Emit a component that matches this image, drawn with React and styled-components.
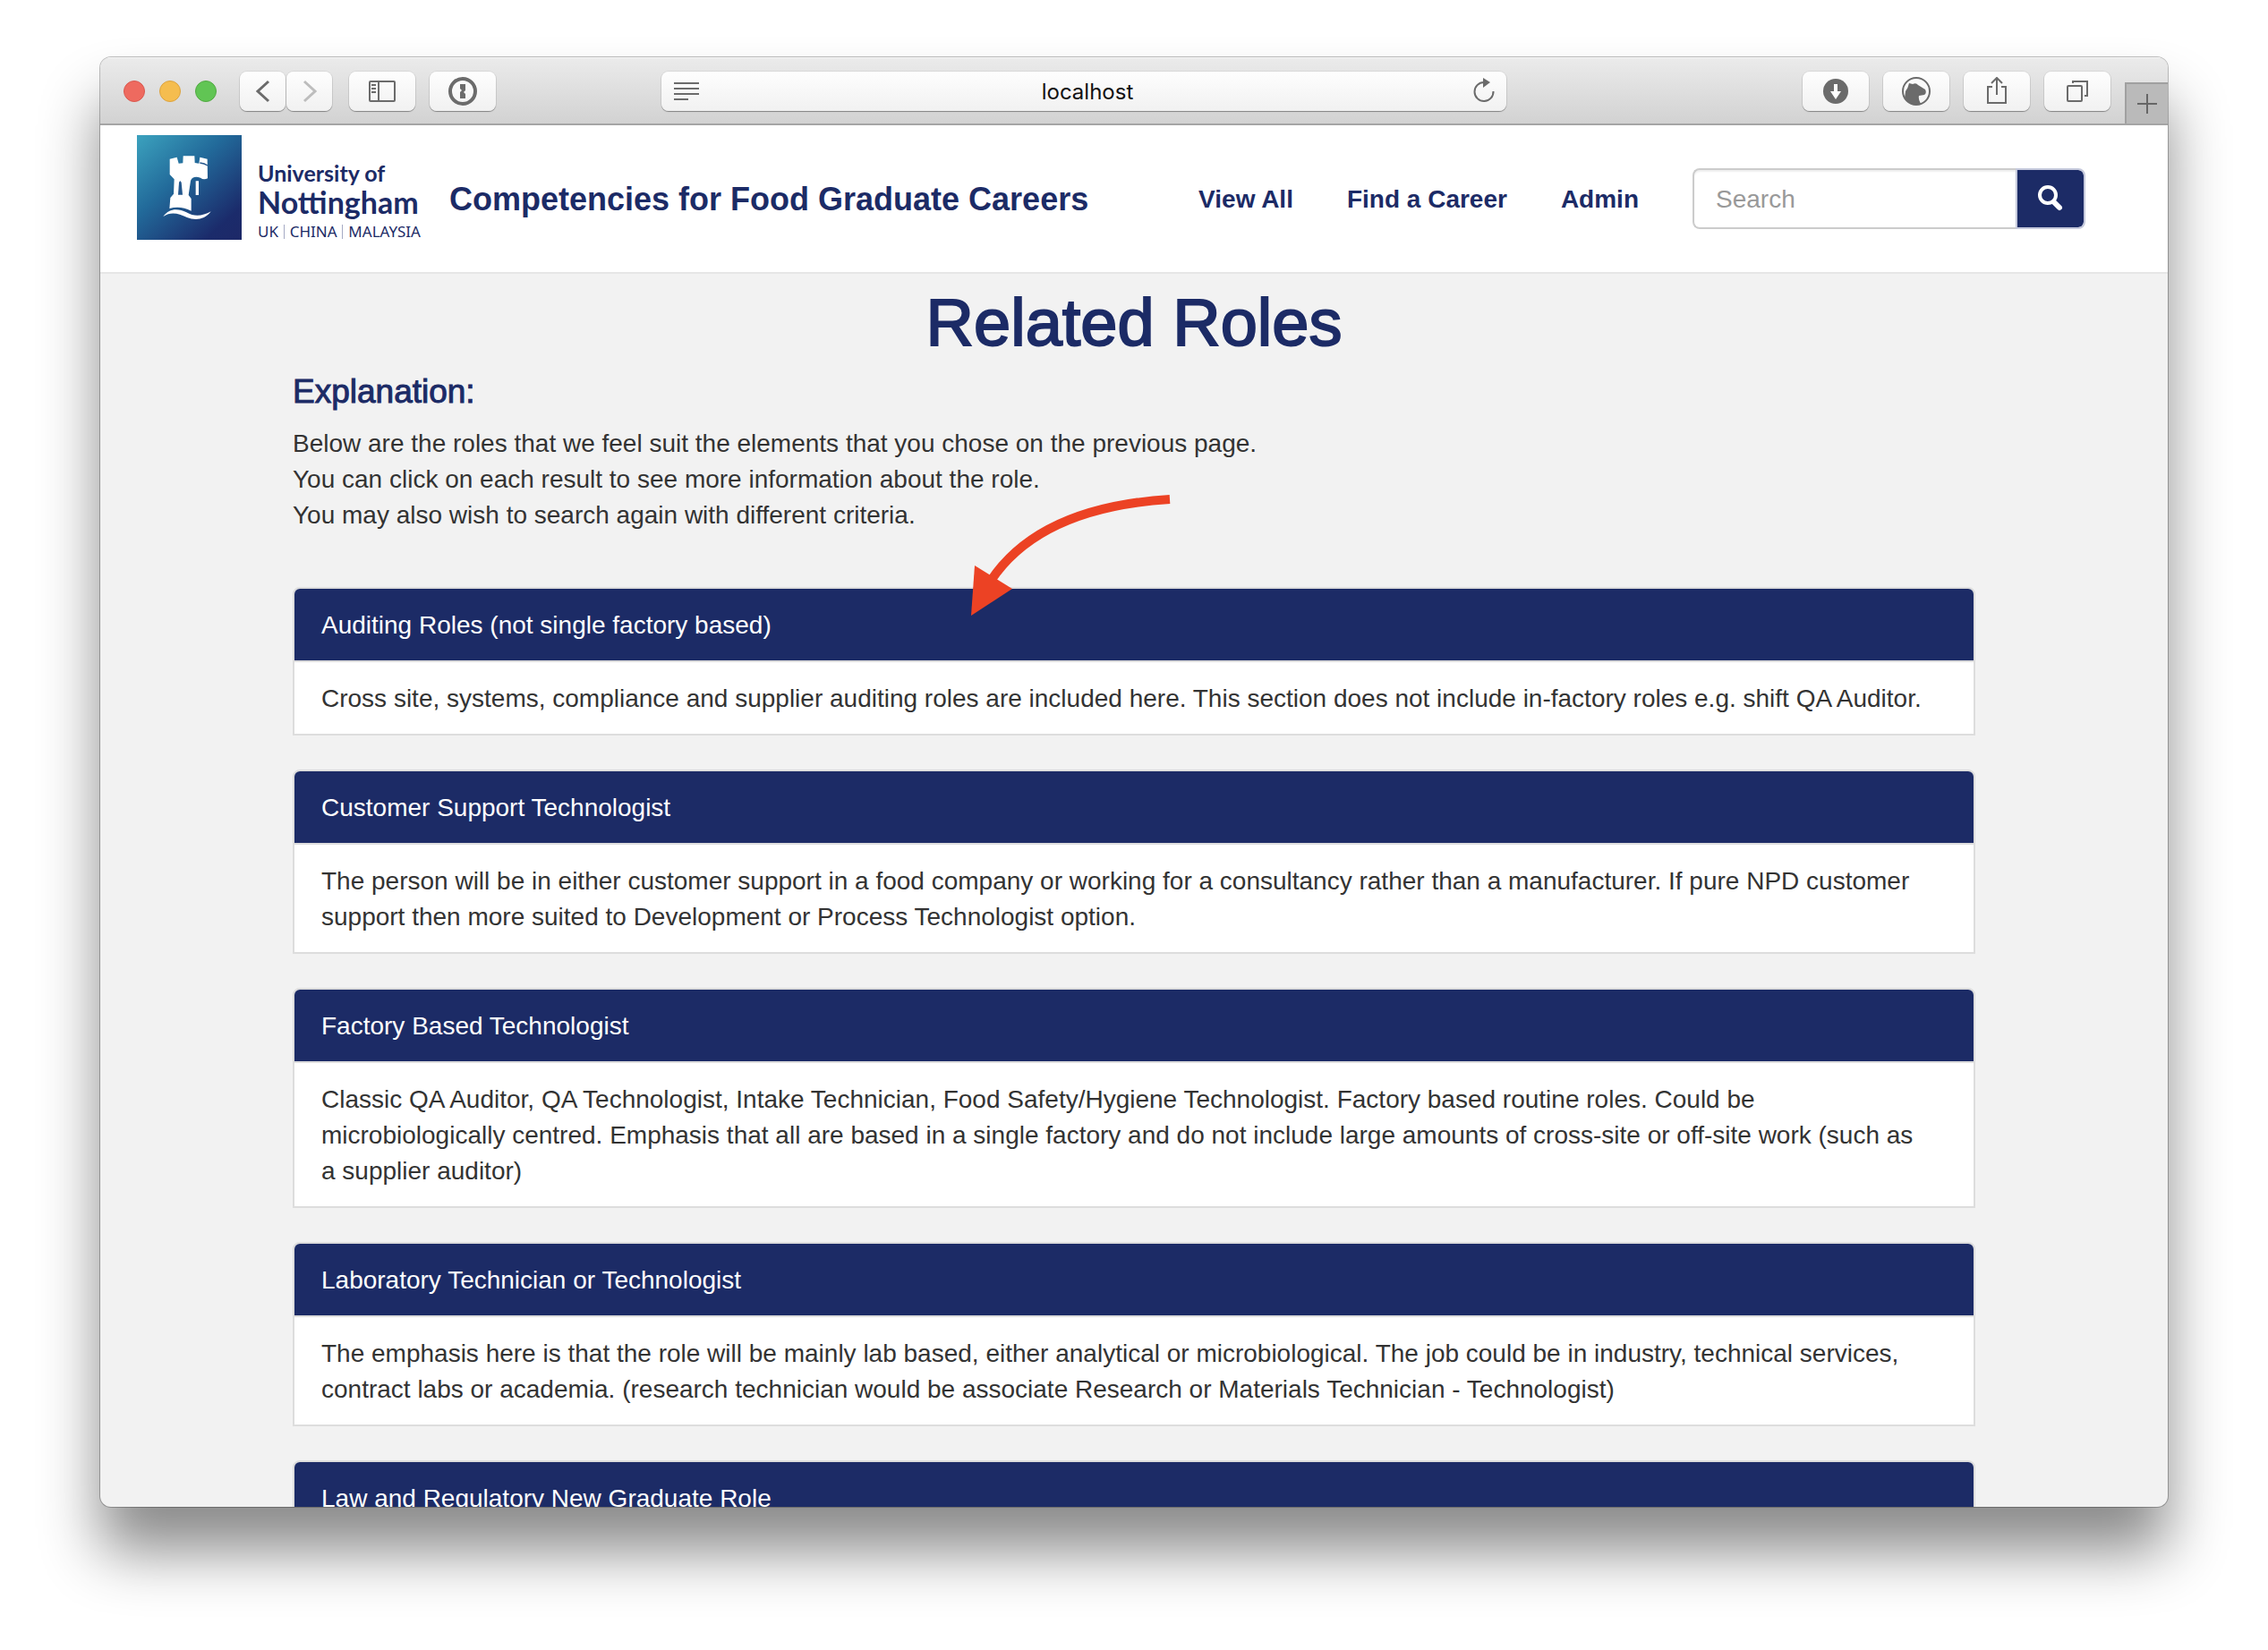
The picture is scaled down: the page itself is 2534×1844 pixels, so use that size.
import React from 'react';
import styled, { createGlobalStyle } from 'styled-components';

const navy = '#1c2b66';
const sans = '"Liberation Sans", Arial, sans-serif';

const GlobalStyle = createGlobalStyle`
  *, *::before, *::after { box-sizing: border-box; }
  body { margin: 0; background: #fff; font-family: ${sans}; font-size: 28px; line-height: 40px; color: #333; }
  button, input { font: inherit; }
  h1, h2, h3, p { margin: 0; }
`;

const Desktop = styled.div`
  height: 100vh;
  padding: 64px 112px 160px;
  overflow: hidden;
`;

const BrowserWindow = styled.div`
  display: flex;
  flex-direction: column;
  height: 100%;
  overflow: hidden;
  border-radius: 12px;
  background: #f2f2f2;
  box-shadow: 0 0 0 1px rgba(0, 0, 0, 0.25), 0 50px 66px rgba(0, 0, 0, 0.46);
`;

const Toolbar = styled.div`
  display: flex;
  flex: none;
  align-items: center;
  height: 76px;
  padding: 2px 0 0 26px;
  border-bottom: 2px solid #a5a5a5;
  background: linear-gradient(#ebebeb, #d2d2d2);
  box-shadow: inset 0 1px 0 #f6f6f6;
`;

const Group = styled.div`
  display: flex;
  flex: none;
  gap: ${({ $gap }) => $gap}px;
  margin-right: ${({ $after = 0 }) => $after}px;
`;

const Light = styled.button`
  width: 24px;
  height: 24px;
  padding: 0;
  border: 1px solid ${({ $edge }) => $edge};
  border-radius: 50%;
  background: ${({ $fill }) => $fill};
`;

const ToolButton = styled.button`
  display: flex;
  align-items: center;
  justify-content: center;
  width: ${({ $narrow }) => ($narrow ? 51 : 74)}px;
  height: 44px;
  padding: 0;
  border: 0;
  border-radius: 8px;
  color: #6b6b6b;
  background: linear-gradient(#fefefe, #f1f1f1);
  box-shadow: 0 1px 1px rgba(0, 0, 0, 0.35), 0 0 0 1px rgba(0, 0, 0, 0.06);
`;

const AddressArea = styled.div`
  display: flex;
  flex: 1;
  justify-content: center;
  padding-right: 146px;
`;

const AddressBar = styled.div`
  display: flex;
  align-items: center;
  width: 944px;
  height: 44px;
  padding: 0 13px;
  border-radius: 8px;
  color: #6b6b6b;
  background: linear-gradient(#fefefe, #f1f1f1);
  box-shadow: 0 1px 1px rgba(0, 0, 0, 0.35), 0 0 0 1px rgba(0, 0, 0, 0.06);
`;

const AddressInput = styled.input`
  flex: 1;
  min-width: 0;
  padding: 2px 0 0;
  border: 0;
  outline: 0;
  background: none;
  color: #111;
  font-family: Inter, sans-serif;
  font-size: 24px;
  text-align: center;
`;

const PlainButton = styled.button`
  display: flex;
  padding: 0;
  border: 0;
  background: none;
  color: inherit;
`;

const NewTab = styled.button`
  display: flex;
  align-items: center;
  justify-content: center;
  align-self: flex-end;
  width: 48px;
  height: 46px;
  padding: 0;
  border: 0;
  border-top: 2px solid #a0a0a0;
  border-left: 2px solid #a0a0a0;
  background: #bababa;
  color: #666;
`;

const SiteHeader = styled.header`
  display: flex;
  flex: none;
  align-items: center;
  height: 166px;
  padding: 0 92px 0 41px;
  border-bottom: 2px solid #e6e6e6;
  background: #fff;
`;

const Brand = styled.a`
  display: flex;
  gap: 18px;
  height: 142px;
  color: ${navy};
  text-decoration: none;
`;

const CastleBadge = styled.svg`
  flex: none;
`;

const Wordmark = styled.span`
  display: flex;
  flex-direction: column;
  width: 182px;
  padding-top: 26px;
  white-space: nowrap;
`;

const WordLine = styled.span`
  font-family: Lato, sans-serif;
  font-size: ${({ $size }) => $size}px;
  line-height: ${({ $line }) => $line}px;
  font-weight: 700;
`;

const Campuses = styled.span`
  display: flex;
  justify-content: space-between;
  font-family: "Noto Sans", sans-serif;
  font-size: 17px;
  line-height: 32px;
`;

const Divider = styled.i`
  width: 1px;
  height: 16px;
  margin-top: 8px;
  background: #a5aac4;
`;

const SiteTitle = styled.a`
  margin-left: 32px;
  padding-top: 2px;
  color: ${navy};
  font-size: 36px;
  font-weight: 700;
  text-decoration: none;
  white-space: nowrap;
`;

const Nav = styled.nav`
  display: flex;
  gap: 60px;
  margin-left: auto;
  padding-top: 2px;
  white-space: nowrap;
`;

const NavLink = styled.a`
  color: ${navy};
  font-weight: 700;
  text-decoration: none;
`;

const SearchForm = styled.form`
  display: flex;
  width: 439px;
  height: 68px;
  margin-left: 60px;
`;

const SearchInput = styled.input`
  flex: 1;
  min-width: 0;
  padding: 2px 24px 0;
  border: 2px solid #ccc;
  border-right: 0;
  border-radius: 8px 0 0 8px;
  outline: 0;
  box-shadow: inset 0 2px 2px rgba(0, 0, 0, 0.07);
  color: #333;
  &::placeholder { color: #999; opacity: 1; }
`;

const SearchButton = styled.button`
  display: flex;
  align-items: center;
  justify-content: center;
  width: 78px;
  padding: 0;
  border: 2px solid #c5c9dc;
  border-radius: 0 8px 8px 0;
  background: ${navy};
  background-clip: padding-box;
`;

const Content = styled.main`
  width: 100%;
  max-width: 1880px;
  margin: 0 auto;
  padding-top: 15px;
`;

const PageTitle = styled.h1`
  color: ${navy};
  font-size: 74px;
  line-height: 80px;
  font-weight: 400;
  text-align: center;
  -webkit-text-stroke: 2px ${navy};
`;

const Intro = styled.section`
  position: relative;
  padding: 17px 0 60px;
`;

const IntroTitle = styled.h2`
  margin-bottom: 18px;
  color: ${navy};
  font-size: 37px;
  line-height: 40px;
  font-weight: 400;
  -webkit-text-stroke: 1px ${navy};
`;

const Arrow = styled.svg`
  position: absolute;
  left: 756px;
  bottom: -34px;
`;

const RoleList = styled.div`
  display: grid;
  gap: 38px;
`;

const RoleCard = styled.article`
  border: 2px solid #ddd;
  border-radius: 8px 8px 0 0;
  background: #fff;
`;

const RoleTitle = styled.h3`
  padding: 21px 30px 19px;
  border-radius: 6px 6px 0 0;
  background: ${navy};
  font-size: 28px;
  font-weight: 400;
`;

const RoleLink = styled.a`
  color: #fff;
  text-decoration: none;
`;

const RoleText = styled.p`
  padding: 21px 30px 19px;
  border-top: 2px solid #ddd;
`;

const roles = [
  {
    title: 'Auditing Roles (not single factory based)',
    lines: ['Cross site, systems, compliance and supplier auditing roles are included here. This section does not include in-factory roles e.g. shift QA Auditor.'],
  },
  {
    title: 'Customer Support Technologist',
    lines: [
      'The person will be in either customer support in a food company or working for a consultancy rather than a manufacturer. If pure NPD customer',
      'support then more suited to Development or Process Technologist option.',
    ],
  },
  {
    title: 'Factory Based Technologist',
    lines: [
      'Classic QA Auditor, QA Technologist, Intake Technician, Food Safety/Hygiene Technologist. Factory based routine roles. Could be',
      'microbiologically centred. Emphasis that all are based in a single factory and do not include large amounts of cross-site or off-site work (such as',
      'a supplier auditor)',
    ],
  },
  {
    title: 'Laboratory Technician or Technologist',
    lines: [
      'The emphasis here is that the role will be mainly lab based, either analytical or microbiological. The job could be in industry, technical services,',
      'contract labs or academia. (research technician would be associate Research or Materials Technician - Technologist)',
    ],
  },
  { title: 'Law and Regulatory New Graduate Role', lines: [] },
];

const Icon = ({ w = 32, h = 32, children }) => (
  <svg width={w} height={h} viewBox={`0 0 ${w} ${h}`} fill="none" stroke="currentColor" strokeWidth="2" aria-hidden="true">
    {children}
  </svg>
);

const CastleMark = () => (
  <CastleBadge width="117" height="117" viewBox="39 33 351 351" aria-hidden="true">
    <defs>
      <linearGradient id="mark" x1="0.05" y1="0" x2="0.95" y2="1">
        <stop offset="0" stopColor="#3a9fbc" />
        <stop offset="0.4" stopColor="#226a9a" />
        <stop offset="0.85" stopColor="#1b2b6b" />
        <stop offset="1" stopColor="#1d2968" />
      </linearGradient>
    </defs>
    <rect x="39" y="33" width="351" height="351" fill="url(#mark)" />
    <g fill="#fff">
      <path d="M149 113 L173 107 L179 128 L193 127 L194 103 L232 103 L233 126 L247 128 L250 107 L275 113 L276 178 Q262 184 252 176 Q226 168 219 186 L212 234 L221 246 V287 Q184 268 148 279 L151 243 L162 230 L164 181 L149 165 Z" />
      <path d="M236 187h10v47h-10z" />
      <path d="M127 306 C149 276 178 279 205 292 C232 308 258 305 287 289 C265 319 232 319 207 309 C178 295 153 288 127 306 Z" />
    </g>
    <path d="M180 192 Q184 181 188 192 L192 233 H177 Z" fill="#24578c" />
    <path d="M250 126 Q265 127 276 135" stroke="#24578c" strokeWidth="4" fill="none" />
  </CastleBadge>
);

export default function App() {
  return (
    <Desktop>
      <GlobalStyle />
      <BrowserWindow>
        <Toolbar>
          <Group $gap={16} $after={26}>
            <Light $fill="#ee6a5f" $edge="#d9584f" aria-label="Close" />
            <Light $fill="#f5bd4f" $edge="#dca33f" aria-label="Minimise" />
            <Light $fill="#61c554" $edge="#52a943" aria-label="Zoom" />
          </Group>
          <Group $gap={1} $after={19}>
            <ToolButton $narrow aria-label="Back">
              <Icon><path d="M22 5 L10 16 L22 27" strokeWidth="3" /></Icon>
            </ToolButton>
            <ToolButton $narrow aria-label="Forward">
              <Icon><path d="M10 5 L22 16 L10 27" strokeWidth="3" stroke="#bdbdbd" /></Icon>
            </ToolButton>
          </Group>
          <Group $gap={16}>
            <ToolButton aria-label="Show sidebar">
              <Icon>
                <rect x="2" y="5" width="28" height="22" rx="1" />
                <path d="M12 5v22M4 9h5M4 13h5M4 17h5" />
              </Icon>
            </ToolButton>
            <ToolButton aria-label="Password manager">
              <Icon>
                <circle cx="16" cy="16" r="14" strokeWidth="4" />
                <path d="M13 8h6v7l-2 2 2 2v5h-6v-7l2-2-2-2z" fill="currentColor" stroke="none" />
              </Icon>
            </ToolButton>
          </Group>
          <AddressArea>
            <AddressBar>
              <PlainButton aria-label="Reader view">
                <Icon><path d="M1 7h28M1 13h28M1 19h28M1 25h16" /></Icon>
              </PlainButton>
              <AddressInput aria-label="Address" defaultValue="localhost" />
              <PlainButton aria-label="Reload">
                <Icon w={24}>
                  <path d="M12 6 A10.5 10.5 0 1 0 22.500 16" />
                  <path d="M11 1 L19 6 L11 12 Z" fill="currentColor" stroke="none" />
                </Icon>
              </PlainButton>
            </AddressBar>
          </AddressArea>
          <Group $gap={16} $after={16}>
            <ToolButton aria-label="Downloads">
              <Icon>
                <circle cx="16" cy="16" r="14" fill="currentColor" stroke="none" />
                <path d="M14 8h4v8h4l-6 9-6-9h4z" fill="#fff" stroke="none" />
              </Icon>
            </ToolButton>
            <ToolButton aria-label="Privacy extension">
              <Icon>
                <circle cx="16" cy="16" r="15" />
                <path d="M3 24 L4 16 Q7 12 8 7 L12 8 Q16 6 18 9 L26 14 Q28 18 25 20 L19 21 Q18 25 21 30 Q10 34 3 24Z" fill="currentColor" stroke="none" />
              </Icon>
            </ToolButton>
            <ToolButton aria-label="Share">
              <Icon>
                <path d="M11 11H6v18h20V11h-5M16 20V2M10 7l6-6 6 6" />
              </Icon>
            </ToolButton>
            <ToolButton aria-label="Show all tabs">
              <Icon>
                <rect x="5" y="10" width="16" height="17" rx="1" />
                <path d="M11 7V5h16v16h-3" />
              </Icon>
            </ToolButton>
          </Group>
          <NewTab aria-label="New tab">
            <Icon w={24} h={24}><path d="M12 1v22M1 12h22" /></Icon>
          </NewTab>
        </Toolbar>

        <SiteHeader>
          <Brand href="#" aria-label="University of Nottingham">
            <CastleMark />
            <Wordmark>
              <WordLine $size={25} $line={32}>University of</WordLine>
              <WordLine $size={34} $line={34}>Nottingham</WordLine>
              <Campuses>
                <span>UK</span><Divider /><span>CHINA</span><Divider /><span>MALAYSIA</span>
              </Campuses>
            </Wordmark>
          </Brand>
          <SiteTitle href="#">Competencies for Food Graduate Careers</SiteTitle>
          <Nav>
            <NavLink href="#">View All</NavLink>
            <NavLink href="#">Find a Career</NavLink>
            <NavLink href="#">Admin</NavLink>
          </Nav>
          <SearchForm onSubmit={(e) => e.preventDefault()}>
            <SearchInput type="search" placeholder="Search" aria-label="Search" />
            <SearchButton aria-label="Submit search">
              <svg width="32" height="32" viewBox="0 0 32 32" fill="none" stroke="#fff" strokeLinecap="round" aria-hidden="true">
                <circle cx="13" cy="12" r="9" strokeWidth="4" />
                <path d="M20 20l6 6" strokeWidth="6" />
              </svg>
            </SearchButton>
          </SearchForm>
        </SiteHeader>

        <Content>
          <PageTitle>Related Roles</PageTitle>
          <Intro>
            <IntroTitle>Explanation:</IntroTitle>
            <p>Below are the roles that we feel suit the elements that you chose on the previous page.</p>
            <p>You can click on each result to see more information about the role.</p>
            <p>You may also wish to search again with different criteria.</p>
            <Arrow width="228" height="140" viewBox="1083 550 228 140" aria-hidden="true">
              <path d="M1307 558 C1210 564 1143 595 1107 649" fill="none" stroke="#ec4224" strokeWidth="10" />
              <path d="M1089 632 L1131 658 L1085 688 Z" fill="#ec4224" />
            </Arrow>
          </Intro>
          <RoleList>
            {roles.map((role) => (
              <RoleCard key={role.title}>
                <RoleTitle><RoleLink href="#">{role.title}</RoleLink></RoleTitle>
                {role.lines.length > 0 && (
                  <RoleText>
                    {role.lines.map((line, i) => (
                      <React.Fragment key={line}>{i > 0 && <br />}{line}</React.Fragment>
                    ))}
                  </RoleText>
                )}
              </RoleCard>
            ))}
          </RoleList>
        </Content>
      </BrowserWindow>
    </Desktop>
  );
}
